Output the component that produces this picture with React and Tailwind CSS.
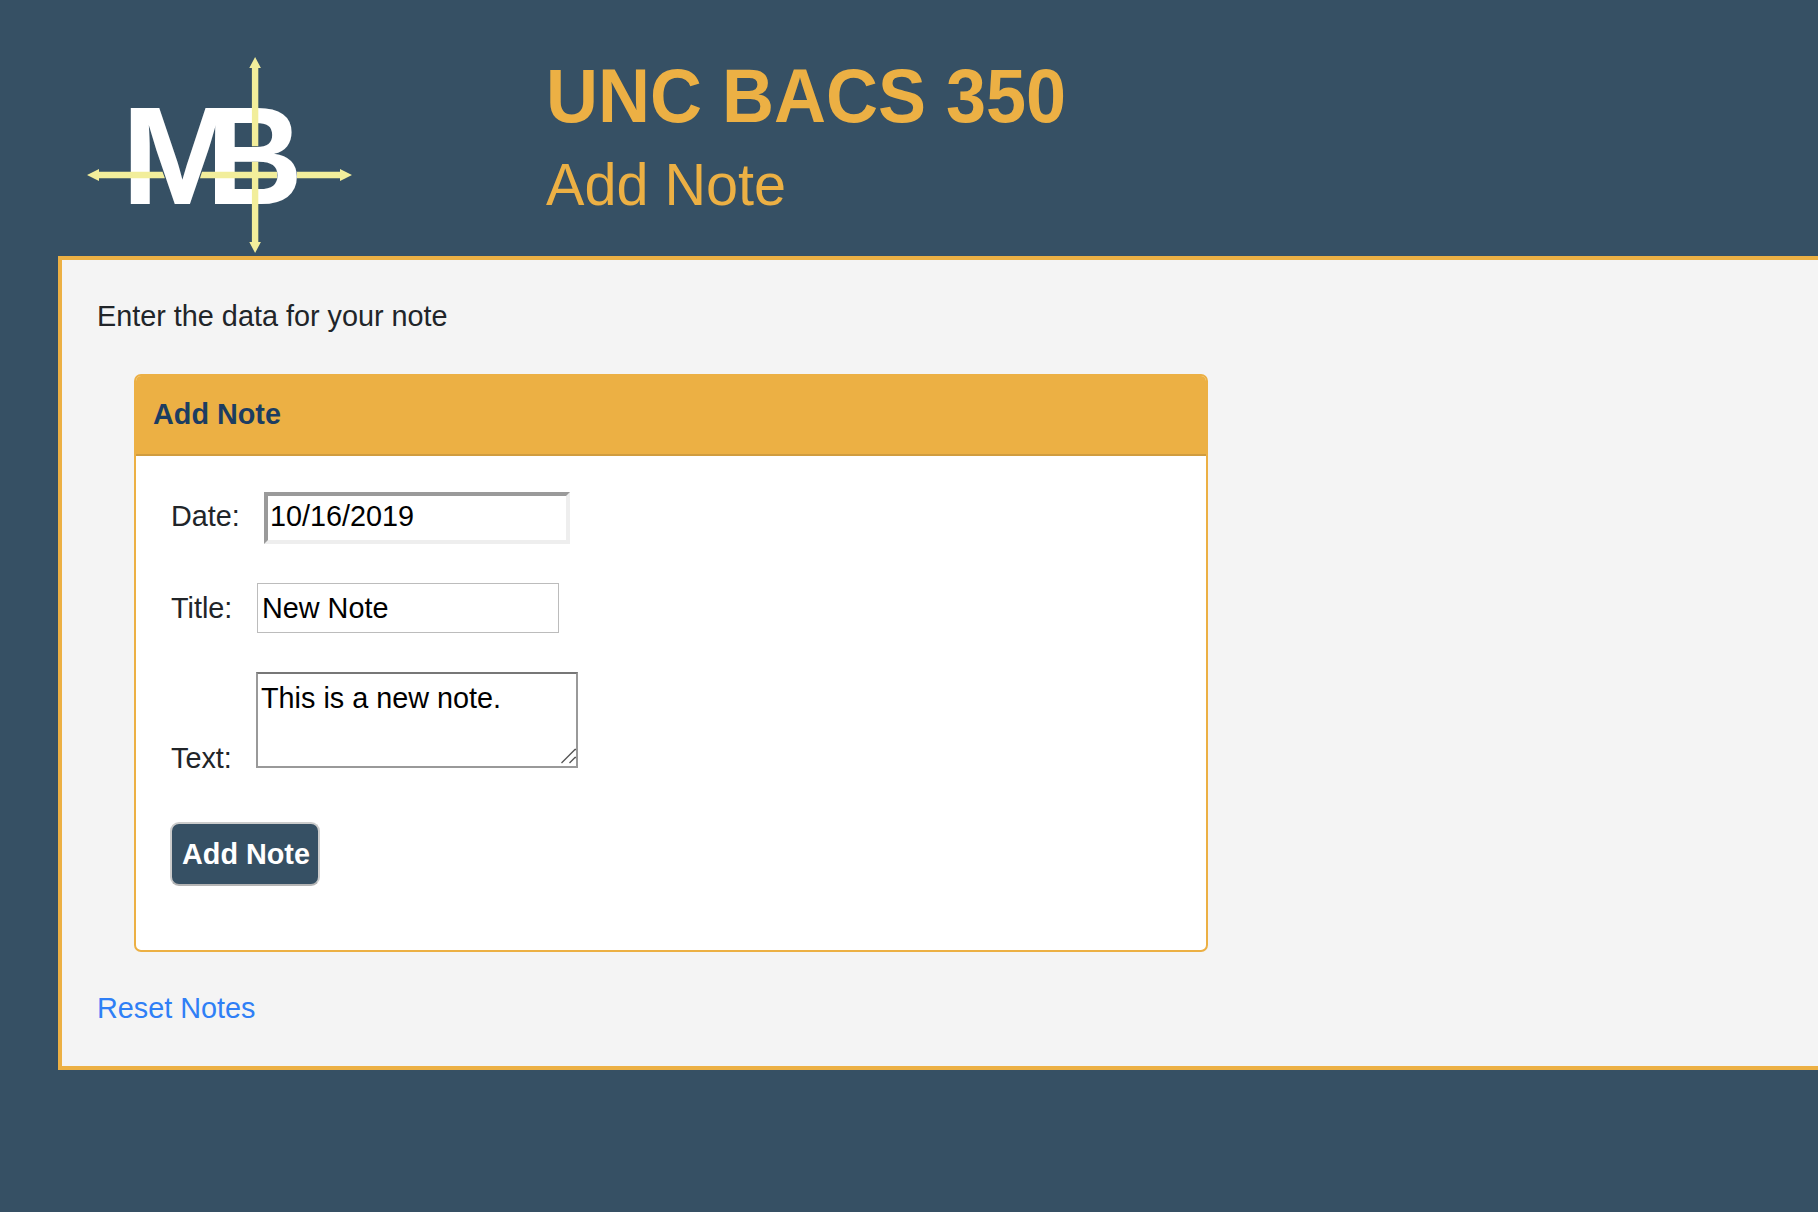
function Logo() {
  return (
    <svg className="h-[204px] w-[272px] shrink-0" viewBox="84 53 272 204" aria-label="MB">
      <g fill="#fff" fontFamily="Liberation Sans" fontWeight="700" fontSize="139">
        <text transform="translate(121 204.3) scale(1.06 1)">M</text>
        <text transform="translate(206.5 204.3) scale(0.96 1)">B</text>
      </g>
      <g fill="#f2ee9b">
        <path d="M87 175l12-6v2.8h63.5l2.4 6.4H99v2.8z" />
        <path d="M202 171.8h75v6.4h-77z" />
        <path d="M297 171.8h43V169l12 6-12 6v-2.8h-43z" />
        <path d="M255.1 57l5.8 11h-2.6v78.3h-6.4V68h-2.6z" />
        <path d="M251.9 161.7h6.4V242h2.6l-5.8 11-5.8-11h2.6z" />
      </g>
    </svg>
  );
}

export default function App() {
  return (
    <div className="h-[1212px] w-full overflow-hidden bg-[#365064] pl-[58px] font-['Liberation_Sans',sans-serif] text-[28.8px] leading-[43.2px] text-[#212529]">
      <header className="flex h-[256px] pt-[53px] pl-[26px] text-[#ecb044]">
        <Logo />
        <div className="pt-px pl-[190px]">
          <h1 className="origin-[0_68px] scale-y-[1.045] text-[72px] leading-[86.4px] font-bold whitespace-nowrap">UNC BACS 350</h1>
          <h2 className="mt-[11px] origin-[0_54px] scale-y-[1.035] text-[57.6px] leading-[69px] whitespace-nowrap">Add Note</h2>
        </div>
      </header>
      <main className="-mr-2 h-[814px] border-4 border-[#ecb044] bg-[#f4f4f4] pt-[35px] pl-9">
        <p className="-ml-px">Enter the data for your note</p>
        <section className="mt-[35.8px] ml-9 h-[578px] w-[1074px] overflow-hidden rounded-[7px] border-2 border-[#ecb044] bg-white">
          <h3 className="h-20 border-b-2 border-[#d09c3f] bg-[#ecb044] pt-[17px] pl-[17px] font-bold text-[#1c3d61]">Add Note</h3>
          <form className="flex flex-col items-start pt-[36px] pl-[35px] text-black">
            <div className="flex h-[52px]">
              <label className="w-[93px] pt-[3px] text-[#212529]">Date:</label>
              <input defaultValue="10/16/2019" className="h-[52px] w-[306px] border-4 border-t-[#9a9a9a] border-r-[#eee] border-b-[#eee] border-l-[#9a9a9a] bg-white px-[2px] pb-1" />
            </div>
            <div className="mt-[39px] flex h-[50px]">
              <label className="w-[86px] pt-1 text-[#212529]">Title:</label>
              <input defaultValue="New Note" className="h-[50px] w-[302px] border border-[#bcbcbc] bg-white pr-[3px] pl-1" />
            </div>
            <div className="mt-[39px] flex h-24 items-end">
              <label className="-mb-3 w-[85px] text-[#212529]">Text:</label>
              <div className="relative h-24">
                <textarea defaultValue="This is a new note." className="block h-24 w-[322px] resize-none overflow-hidden border-2 border-[#999] border-t-[#777] bg-white pt-[3px] pr-1 pl-[3px]" />
                <svg className="absolute right-[2px] bottom-1 h-4 w-4" viewBox="0 0 16 16" fill="none" stroke="#555" strokeWidth="1.3">
                  <path d="M1.5 15L15 1.5h1M9.5 15l5.5-5.5h1" />
                </svg>
              </div>
            </div>
            <button type="button" className="-ml-px mt-[54px] h-16 w-[150px] rounded-[9px] border-2 border-[#ccc] border-b-[#b5b5b5] bg-[#365064] pt-px pl-[2px] font-bold whitespace-nowrap text-white">Add Note</button>
          </form>
        </section>
        <a href="#" className="mt-[35px] -ml-px block w-fit text-[#2f7ff6]">Reset Notes</a>
      </main>
    </div>
  );
}
